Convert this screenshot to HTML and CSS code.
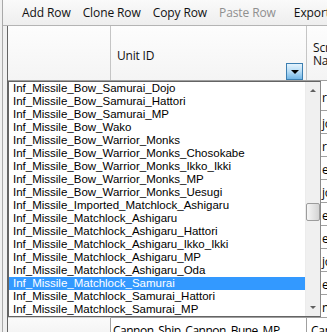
FILE: index.html
```html
<!DOCTYPE html>
<html lang="en">
<head>
  <meta charset="UTF-8" />
  <meta name="viewport" content="width=device-width, initial-scale=1.0" />
  <title>Unit Editor</title>
  <link rel="stylesheet" href="styles.css">
</head>
<body>
  <div class="app">
    <div class="toolbar">
      <span class="grip"></span>
      <button class="tool">Add Row</button>
      <button class="tool">Clone Row</button>
      <button class="tool">Copy Row</button>
      <button class="tool disabled">Paste Row</button>
      <span class="tool-sep"></span>
      <button class="tool">Export</button>
    </div>

    <div class="grid-wrap">
      <div class="grid">
        <div class="grid-head">
          <div class="hcell row-head"></div>
          <div class="hcell col-unit">Unit ID<span class="drop-btn"><span class="drop-arrow"></span></span></div>
          <div class="hcell col-script">Script<br>Name</div>
        </div>

        <div class="grid-row first"><div class="cell row-head"></div><div class="cell"></div><div class="cell col-script">ro</div></div>
        <div class="grid-row"><div class="cell row-head"></div><div class="cell"></div><div class="cell col-script">jo</div></div>
        <div class="grid-row"><div class="cell row-head"></div><div class="cell"></div><div class="cell col-script">ro</div></div>
        <div class="grid-row"><div class="cell row-head"></div><div class="cell"></div><div class="cell col-script">e</div></div>
        <div class="grid-row"><div class="cell row-head"></div><div class="cell"></div><div class="cell col-script">jo</div></div>
        <div class="grid-row"><div class="cell row-head"></div><div class="cell"></div><div class="cell col-script">e</div></div>
        <div class="grid-row"><div class="cell row-head"></div><div class="cell"></div><div class="cell col-script">e</div></div>
        <div class="grid-row"><div class="cell row-head"></div><div class="cell"></div><div class="cell col-script">jo</div></div>
        <div class="grid-row"><div class="cell row-head"></div><div class="cell"></div><div class="cell col-script">e</div></div>
        <div class="grid-row"><div class="cell row-head"></div><div class="cell"></div><div class="cell col-script">n</div></div>
        <div class="grid-row"><div class="cell row-head"></div><div class="cell">Cannon_Ship_Cannon_Bune_MP</div><div class="cell col-script full">Cannon</div></div>
      </div>

      <div class="dropdown">
        <ul class="drop-list">
          <li>Inf_Missile_Bow_Samurai_Dojo</li>
          <li>Inf_Missile_Bow_Samurai_Hattori</li>
          <li>Inf_Missile_Bow_Samurai_MP</li>
          <li>Inf_Missile_Bow_Wako</li>
          <li>Inf_Missile_Bow_Warrior_Monks</li>
          <li>Inf_Missile_Bow_Warrior_Monks_Chosokabe</li>
          <li>Inf_Missile_Bow_Warrior_Monks_Ikko_Ikki</li>
          <li>Inf_Missile_Bow_Warrior_Monks_MP</li>
          <li>Inf_Missile_Bow_Warrior_Monks_Uesugi</li>
          <li>Inf_Missile_Imported_Matchlock_Ashigaru</li>
          <li>Inf_Missile_Matchlock_Ashigaru</li>
          <li>Inf_Missile_Matchlock_Ashigaru_Hattori</li>
          <li>Inf_Missile_Matchlock_Ashigaru_Ikko_Ikki</li>
          <li>Inf_Missile_Matchlock_Ashigaru_MP</li>
          <li>Inf_Missile_Matchlock_Ashigaru_Oda</li>
          <li class="selected">Inf_Missile_Matchlock_Samurai</li>
          <li>Inf_Missile_Matchlock_Samurai_Hattori</li>
          <li>Inf_Missile_Matchlock_Samurai_MP</li>
        </ul>
        <div class="vscroll">
          <span class="arrow-up"></span>
          <span class="thumb"></span>
          <span class="arrow-down"></span>
        </div>
      </div>
    </div>
  </div>
</body>
</html>
```

FILE: styles.css
```css
html, body { margin: 0; padding: 0; }
body { width: 327px; height: 332px; overflow: hidden; background: #f0f0f0; font-family: "Open Sans", "Liberation Sans", sans-serif; }
.app { margin-left: 2px; border-left: 1px solid #a9a9a9; height: 332px; overflow: hidden; }

/* toolbar */
.toolbar { display: flex; align-items: center; height: 25px; border-bottom: 1px solid #b4b4b4; background: linear-gradient(#fafafa, #eeeeee); white-space: nowrap; }
.grip { width: 2px; height: 19px; margin-left: 7px; margin-right: 6px; background: repeating-linear-gradient(#9a9a9a 0 1px, transparent 1px 3px); }
.tool { border: none; background: none; padding: 0 6px; margin: 0; font-family: "Open Sans", sans-serif; font-size: 12px; letter-spacing: -0.1px; color: #111; line-height: 22px; }
.tool.disabled { color: #8f8f8f; }
.tool-sep { width: 1px; height: 18px; background: #b8b8b8; margin: 0 3px; }

/* grid */
.grid-wrap { position: relative; padding-left: 4px; }
.grid { border-left: 1px solid #646464; background: #fff; }
.grid-head, .grid-row { display: grid; grid-template-columns: 103px 196px 21px; }
.grid-head { height: 55px; border-bottom: 1px solid #a0a0a0; box-sizing: border-box; background: linear-gradient(#fdfdfd, #f4f4f4); }
.hcell { position: relative; display: flex; align-items: center; box-sizing: border-box; border-right: 1px solid #c5c5c5; font-size: 12px; letter-spacing: -0.2px; color: #111; padding-left: 6px; overflow: hidden; }
.hcell.col-unit { padding-top: 4px; }
.hcell.col-script { line-height: 13px; padding-top: 2px; border-right: none; }
.drop-btn { position: absolute; right: 3px; bottom: 0; width: 17px; height: 17px; box-sizing: border-box; border: 1px solid #3c7fb1; background: linear-gradient(#e4f3fd, #b6dcf5 50%, #72b6e6); display: flex; align-items: center; justify-content: center; }
.drop-arrow { width: 0; height: 0; border-left: 4px solid transparent; border-right: 4px solid transparent; border-top: 4px solid #000; margin-top: 1px; }

.grid-row { height: 23px; }
.grid-row.first { height: 30px; }
.cell { box-sizing: border-box; border-right: 1px solid #a0a0a0; border-bottom: 1px solid #a0a0a0; font-size: 12px; letter-spacing: -0.5px; color: #000; padding: 3px 0 0 2px; white-space: nowrap; overflow: hidden; display: flex; align-items: center; }
.cell.row-head { background: linear-gradient(#fbfbfb, #f1f1f1); border-bottom-color: #d0d0d0; }
.cell.col-script { padding-left: 15px; border-right: none; letter-spacing: -0.2px; }
.cell.col-script.full { padding-left: 4px; }

/* dropdown popup */
.dropdown { position: absolute; left: 5px; top: 55px; width: 313px; height: 236px; box-sizing: border-box; border: 1px solid #646464; border-right-color: #8a8a8a; background: #fff; display: flex; }
.drop-list { list-style: none; margin: 0; padding: 0; width: 296px; font-family: "Liberation Sans", Arial, sans-serif; font-size: 11.5px; }
.drop-list li { height: 13px; line-height: 13px; padding-left: 4px; white-space: nowrap; overflow: hidden; color: #000; }
.drop-list li.selected { background: #3399ff; color: #fff; }
.vscroll { position: relative; width: 15px; background: #f0f0f0; border-left: 1px solid #ececec; box-sizing: border-box; }
.arrow-up, .arrow-down { position: absolute; left: 4px; width: 0; height: 0; border-left: 3px solid transparent; border-right: 3px solid transparent; }
.arrow-up { top: 7px; border-bottom: 3px solid #606060; }
.arrow-down { bottom: 7px; border-top: 3px solid #606060; }
.thumb { position: absolute; left: 0; top: 121px; width: 14px; height: 18px; box-sizing: border-box; border: 1px solid #9c9c9c; border-radius: 2px; background: linear-gradient(90deg, #f6f6f6, #e2e2e2 60%, #d4d4d4); }
```
